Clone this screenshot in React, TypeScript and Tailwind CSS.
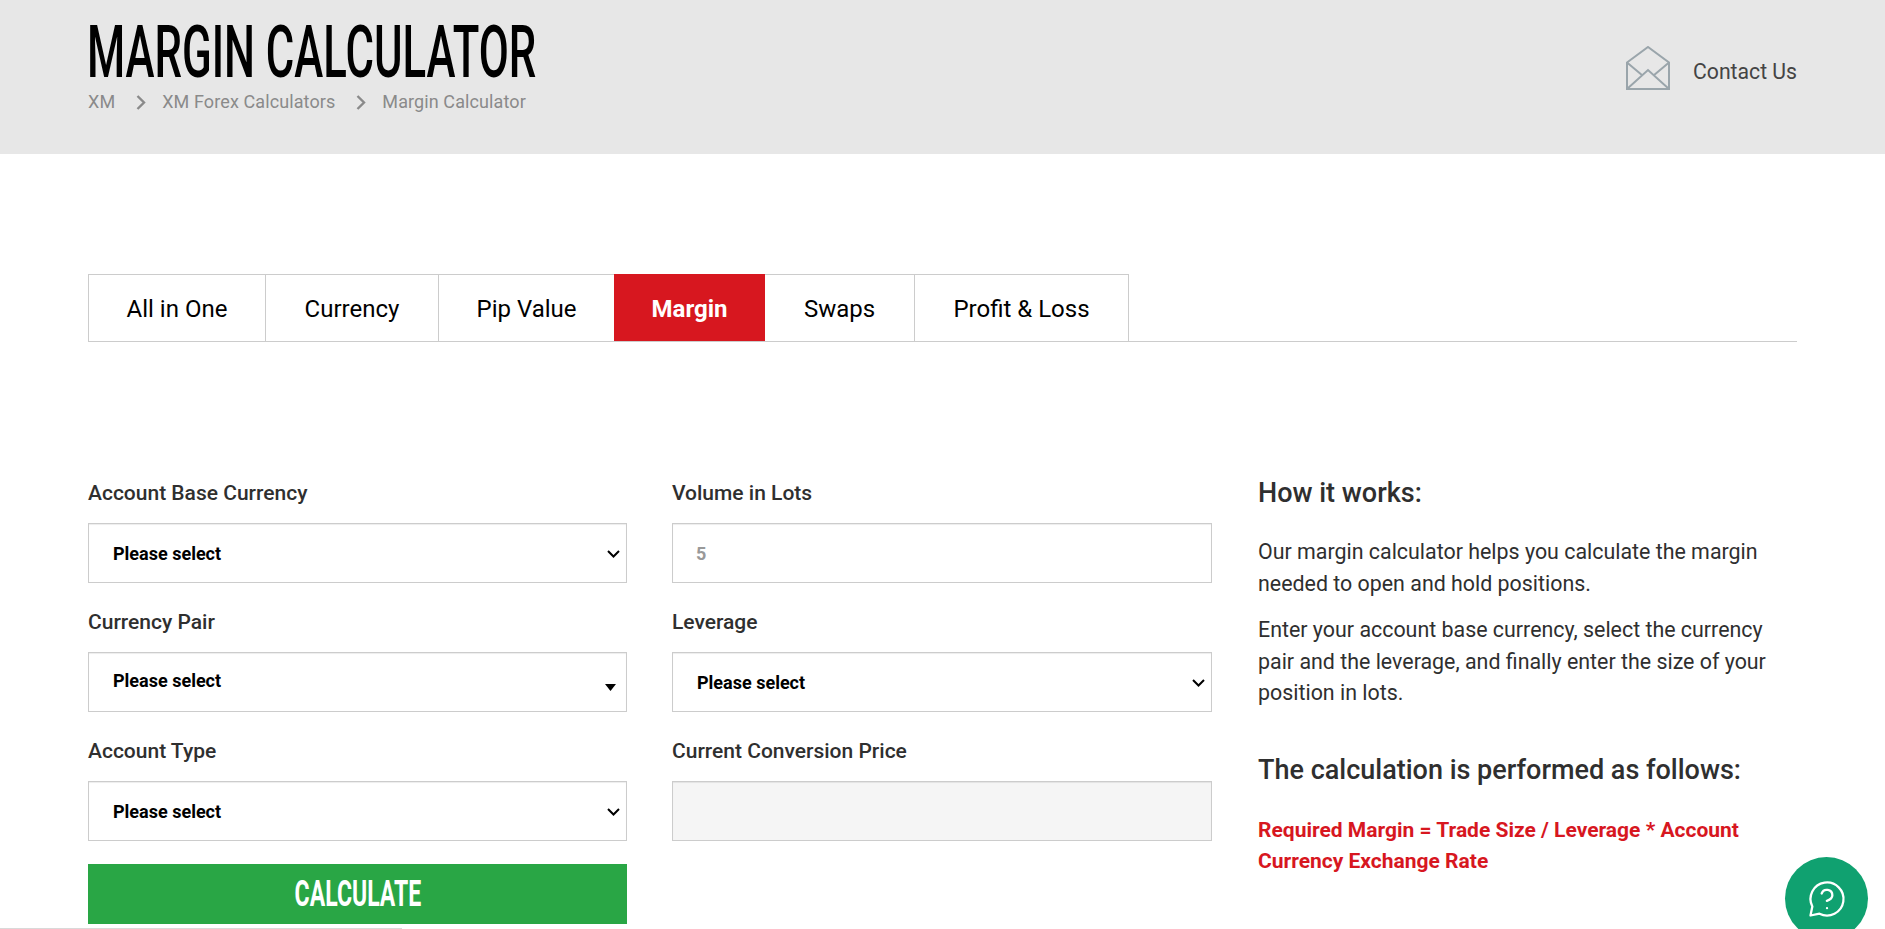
const Field = ({ label, children }: { label: string; children: React.ReactNode }) => (
  <div className="mb-[26px]">
    <label className="block h-[26px] mb-[17px] text-[21px] leading-[26px] font-medium text-[#2f2f2f]">{label}</label>
    {children}
  </div>
);

const boxClass =
  "block w-full h-[60px] border border-[#cccccc] shadow-[inset_0_1px_1px_rgba(0,0,0,0.075)] text-[18px] font-bold";

const SelectBox = () => (
  <div className="relative">
    <select className={boxClass + " appearance-none bg-white pl-[24px] text-black"} defaultValue="">
      <option value="">Please select</option>
    </select>
    <svg
      className="pointer-events-none absolute right-[7px] top-[27px] h-[8px] w-[13px]"
      viewBox="0 0 13 8"
      fill="none"
      stroke="#000"
      strokeWidth="2"
    >
      <path d="M1 1l5.5 5.5L12 1" />
    </svg>
  </div>
);

const Chevron = () => (
  <svg className="ml-[21px] mr-[16px] h-[15px] w-[10px]" viewBox="0 0 10 15" fill="none" stroke="#8a8a8a" strokeWidth="2.4">
    <path d="M1.5 1l6.5 6.5-6.5 6.5" />
  </svg>
);

const App = () => {
  return (
    <div className="relative h-screen overflow-hidden bg-white font-['Roboto',sans-serif]">
      <header className="flex h-[154px] justify-between bg-[#e7e7e7] pl-[88px] pr-[88px]">
        <div>
          <h1 className="-ml-[1px] mt-[25px] h-[56px] origin-left scale-x-[0.606] whitespace-nowrap text-[72px] leading-[56px] font-medium text-black">
            MARGIN CALCULATOR
          </h1>
          <nav className="mt-[8px] flex items-center text-[18px] leading-[26px] tracking-[0.1px] text-[#8a8a8a]">
            <span>XM</span>
            <Chevron />
            <span>XM Forex Calculators</span>
            <Chevron />
            <span>Margin Calculator</span>
          </nav>
        </div>
        <div className="flex h-[144px] items-center gap-[23px]">
          <svg className="mb-[8px] h-[44px] w-[44px]" viewBox="0 0 44 44" fill="none" stroke="#9aa5ab" strokeWidth="2">
            <path d="M1 16.5L22 1l21 15.5V43H1z" />
            <path d="M1 16.5l15.5 13M43 16.5l-15.5 13M1 43l21-19 21 19" />
          </svg>
          <span className="text-[21.2px] leading-[26px] text-[#444444]">Contact Us</span>
        </div>
      </header>

      <main className="px-[88px]">
        <div className="mt-[120px] flex h-[68px] border-b border-[#cccccc] text-[24px] text-black">
          <a className="flex w-[178px] items-center justify-center border border-b-0 border-[#cccccc] pt-[2px]">All in One</a>
          <a className="flex w-[173px] items-center justify-center border-t border-r border-[#cccccc] pt-[2px]">Currency</a>
          <a className="flex w-[175px] items-center justify-center border-t border-[#cccccc] pt-[2px]">Pip Value</a>
          <a className="flex w-[151px] items-center justify-center bg-[#d7171f] pt-[2px] font-bold text-white">Margin</a>
          <a className="flex w-[150px] items-center justify-center border-t border-r border-[#cccccc] pt-[2px]">Swaps</a>
          <a className="flex w-[214px] items-center justify-center border-t border-r border-[#cccccc] pt-[2px]">Profit &amp; Loss</a>
        </div>

        <div className="mt-[138px] grid grid-cols-[539px_540px_1fr] gap-x-[45px]">
          <div>
            <Field label="Account Base Currency"><SelectBox /></Field>
            <Field label="Currency Pair">
              <div className={boxClass + " flex items-center justify-between bg-white pl-[24px] pr-[10px] text-black"}>
                <span className="-mt-[4px]">Please select</span>
                <svg className="mt-[10px] h-[7px] w-[11px]" viewBox="0 0 11 7" fill="#000"><path d="M0 0h11L5.5 7z" /></svg>
              </div>
            </Field>
            <Field label="Account Type"><SelectBox /></Field>
            <button className="-mt-[3px] block h-[60px] w-full bg-[#29a645] text-center">
              <span className="inline-block scale-x-[0.64] text-[36px] leading-[60px] font-bold text-white">CALCULATE</span>
            </button>
          </div>

          <div>
            <Field label="Volume in Lots">
              <input className={boxClass + " bg-white pl-[23px] text-[#999999]"} defaultValue="5" />
            </Field>
            <Field label="Leverage"><SelectBox /></Field>
            <Field label="Current Conversion Price">
              <input className={boxClass + " bg-[#f5f5f5]"} disabled />
            </Field>
          </div>

          <div className="pl-px text-[#2f2f2f]">
            <h3 className="h-[26px] text-[27px] leading-[26px] font-medium">How it works:</h3>
            <p className="mt-[30px] text-[21.4px] leading-[31.6px]">
              Our margin calculator helps you calculate the margin needed to open and hold positions.
            </p>
            <p className="mt-[15px] text-[21.4px] leading-[31.6px]">
              Enter your account base currency, select the currency pair and the leverage, and finally enter the size of your position in lots.
            </p>
            <h3 className="mt-[44px] text-[27px] leading-[34px] font-medium">The calculation is performed as follows:</h3>
            <p className="mt-[28px] text-[21px] leading-[31.5px] font-bold text-[#d7171f]">
              Required Margin = Trade Size / Leverage * Account Currency Exchange Rate
            </p>
          </div>
        </div>
      </main>

      <div className="absolute bottom-0 left-0 h-px w-[402px] bg-[#d9d9d9]" />
      <div className="absolute left-[1785px] top-[857px] flex h-[83px] w-[83px] items-center justify-center rounded-full bg-[#10a170]">
        <svg className="h-[44px] w-[44px]" viewBox="0 0 24 24" fill="none" stroke="#fff" strokeWidth="1.25" strokeLinecap="round" strokeLinejoin="round">
          <path d="M7.9 20A9 9 0 1 0 4 16.1L3 21z" />
          <path d="M9.09 9a3 3 0 0 1 5.83 1c0 2-3 3-3 3" />
          <path d="M12 17h.01" />
        </svg>
      </div>
    </div>
  );
};

export default App;
